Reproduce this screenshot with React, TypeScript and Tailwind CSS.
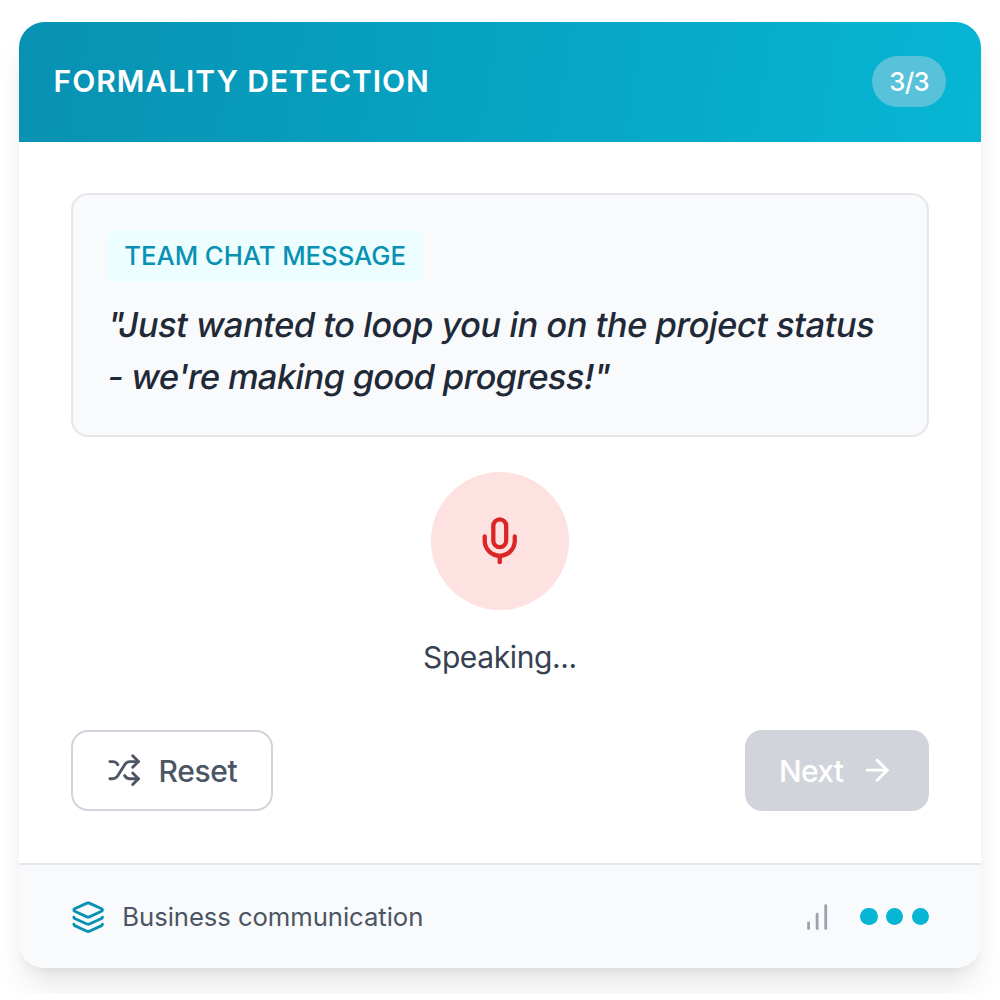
import React from "react";
import { ArrowRight, Layers, Mic, Shuffle } from "lucide-react";

function SignalBars() {
  return (
    <svg
      viewBox="0 0 24 24"
      fill="none"
      stroke="currentColor"
      strokeWidth={2}
      strokeLinecap="round"
      className="size-[34.3px] text-[#9ca3af]"
    >
      <path d="M6 20v-4M12 20V10M18 20V4" />
    </svg>
  );
}

function Header() {
  return (
    <header className="flex h-[120px] items-center justify-between bg-[linear-gradient(100deg,#0891b2,#06b6d4)] px-[34.3px] text-white">
      <h1 className="text-[30px] leading-[43px] font-semibold tracking-[0.96px]">FORMALITY DETECTION</h1>
      <span className="flex h-[51.5px] items-center rounded-full bg-[#58c2db] px-[17.2px] pt-px text-[25.7px] font-medium tracking-[-0.6px]">
        3/3
      </span>
    </header>
  );
}

function Prompt() {
  return (
    <div className="h-[244px] rounded-[17.2px] border-2 border-[#e5e7eb] bg-[#f9fafb] p-[34.3px]">
      <span className="inline-flex h-[52px] items-center rounded-[8.6px] bg-[#ecfeff] px-[17.2px] pt-[2px] text-[25.7px] font-medium tracking-[-0.04px] text-[#0891b2]">
        TEAM CHAT MESSAGE
      </span>
      <p className="mt-[17.6px] -ml-[1.5px] text-[34.3px] leading-[51.5px] font-medium whitespace-nowrap text-[#1f2937]">
        <span className="block w-fit origin-[0_74%] -skew-x-[10deg] tracking-[-0.43px]">
          "Just wanted to loop you in on the project status
        </span>
        <span className="block w-fit origin-[0_74%] -skew-x-[10deg] tracking-[-0.58px]">
          - we're making good progress!"
        </span>
      </p>
    </div>
  );
}

export default function App() {
  return (
    <div className="h-[1000px] w-[1000px] bg-white font-['Inter',sans-serif]">
      <div className="h-[994px] overflow-hidden pt-[21.5px] pl-[19.3px]">
        <main className="flex h-[946.5px] w-[961.3px] flex-col overflow-hidden rounded-[25.7px] bg-white shadow-[0_21.5px_32.2px_-6.4px_rgba(0,0,0,0.1),0_8.6px_12.9px_-8.6px_rgba(0,0,0,0.1)]">
          <Header />
          <section className="flex flex-1 flex-col px-[51.5px] pt-[51.8px]">
            <Prompt />
            <div className="mt-[35px] flex flex-col items-center">
              <div className="flex size-[137.3px] items-center justify-center rounded-full bg-[#fee2e2]">
                <Mic className="size-[51.5px] text-[#dc2626]" strokeWidth={2} />
              </div>
              <p className="mt-[26.4px] text-[30px] leading-[43px] tracking-[-0.38px] text-[#374151]">Speaking...</p>
            </div>
            <div className="mt-[50.8px] flex justify-between text-[30px] font-medium tracking-[-0.4px]">
              <button className="flex h-[81.5px] w-[202.5px] items-center gap-[17.2px] rounded-[17.2px] border-2 border-[#d1d5db] pl-[34.3px] text-[#4b5563]">
                <Shuffle className="size-[34.3px]" />
                <span className="pt-px">Reset</span>
              </button>
              <button className="flex h-[81.5px] w-[184.5px] items-center gap-[16.7px] rounded-[17.2px] bg-[#d1d5db] pl-[34.3px] text-white">
                <span className="pt-px tracking-[-0.65px]">Next</span>
                <ArrowRight className="size-[34.3px]" />
              </button>
            </div>
          </section>
          <footer className="flex h-[105.2px] items-center justify-between border-t-2 border-[#e5e7eb] bg-[#f9fafb] px-[51.5px] pt-px">
            <div className="flex items-center gap-[17.2px] text-[25.7px] tracking-[-0.07px] text-[#4b5563]">
              <Layers className="size-[34.3px] text-[#0891b2]" />
              <span className="pt-px">Business communication</span>
            </div>
            <div className="flex items-center gap-[25.7px]">
              <SignalBars />
              <div className="flex gap-[8.6px]">
                <span className="size-[17.2px] rounded-full bg-[#06b6d4]" />
                <span className="size-[17.2px] rounded-full bg-[#06b6d4]" />
                <span className="size-[17.2px] rounded-full bg-[#06b6d4]" />
              </div>
            </div>
          </footer>
        </main>
      </div>
    </div>
  );
}
